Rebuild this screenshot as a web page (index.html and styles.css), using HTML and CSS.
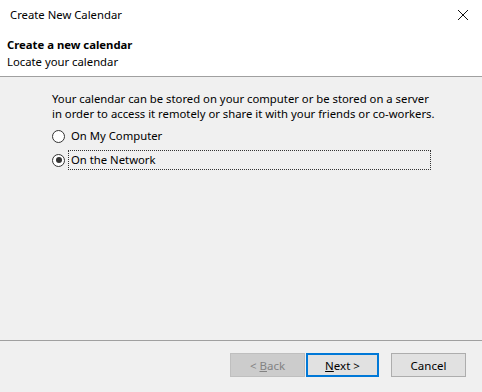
FILE: index.html
```html
<!DOCTYPE html>
<html>
<head>
<meta charset="utf-8">
<link rel="stylesheet" href="styles.css">
</head>
<body>
<div class="window">
  <div class="titlebar">
    <span class="title">Create New Calendar</span>
    <svg class="close" width="12" height="12" viewBox="0 0 12 12"><path d="M1 1 L11 11 M11 1 L1 11" stroke="#111" stroke-width="1"/></svg>
  </div>
  <div class="header">
    <div class="h-title">Create a new calendar</div>
    <div class="h-sub">Locate your calendar</div>
  </div>
  <div class="content">
    <p class="desc">Your calendar can be stored on your computer or be stored on a server<br>in order to access it remotely or share it with your friends or co-workers.</p>
    <div class="radio-row">
      <span class="radio"></span>
      <span class="label">On My Computer</span>
    </div>
    <div class="radio-row">
      <span class="radio checked"></span>
      <span class="label focus">On the Network</span>
    </div>
  </div>
  <div class="footer">
    <button class="btn back disabled">&lt; <u>B</u>ack</button>
    <button class="btn next default"><u>N</u>ext &gt;</button>
    <button class="btn cancel">Cancel</button>
  </div>
</div>
</body>
</html>
```
FILE: styles.css
```css
html, body {
  margin: 0;
  padding: 0;
  width: 482px;
  height: 392px;
  overflow: hidden;
}
body {
  font-family: "Noto Sans", "Open Sans", sans-serif;
  font-size: 11.3px;
  color: #000;
}
.window {
  width: 482px;
  height: 392px;
  display: flex;
  flex-direction: column;
  background: #f0f0f0;
}
.titlebar {
  height: 30px;
  background: #fff;
  display: flex;
  align-items: center;
  justify-content: space-between;
  padding: 0 13px 0 10px;
}
.title {
  line-height: 16px;
}
.close {
  display: block;
}
.header {
  height: 47px;
  background: #fff;
  border-bottom: 1px solid #a0a0a0;
  box-sizing: border-box;
  padding: 6px 0 0 7px;
}
.h-title {
  font-weight: bold;
  line-height: 17px;
}
.h-sub {
  line-height: 18px;
}
.content {
  flex: 1;
  padding: 14px 0 0 52px;
}
.desc {
  margin: 0 0 3px 0;
  line-height: 15px;
}
.radio-row {
  display: flex;
  align-items: center;
  height: 24px;
}
.radio {
  width: 11px;
  height: 11px;
  border: 1px solid #333;
  border-radius: 50%;
  background: #fff;
  box-sizing: content-box;
  display: flex;
  align-items: center;
  justify-content: center;
}
.radio.checked::after {
  content: "";
  width: 6px;
  height: 6px;
  border-radius: 50%;
  background: #333;
}
.label {
  margin-left: 3px;
  line-height: 16px;
  padding: 1px 2px;
  border: 1px dotted transparent;
  box-sizing: border-box;
}
.label.focus {
  border-color: #333;
  width: 363px;
}
.footer {
  height: 52px;
  box-sizing: border-box;
  border-top: 1px solid #a0a0a0;
  display: flex;
  align-items: flex-start;
  justify-content: flex-end;
  padding: 12px 16px 0 0;
}
.btn {
  font-family: inherit;
  font-size: 11.5px;
  height: 24px;
  padding: 0;
  background: #e1e1e1;
  border: 1px solid #adadad;
  color: #000;
}
.btn u {
  text-decoration: underline;
}
.btn.back {
  width: 75px;
}
.btn.next {
  width: 73px;
  margin-left: 1px;
}
.btn.disabled {
  background: #cccccc;
  border-color: #bfbfbf;
  color: #838383;
}
.btn.default {
  border: 2px solid #0078d7;
  background: #e1e1e1;
}
.btn.cancel {
  width: 75px;
  margin-left: 12px;
}
```
